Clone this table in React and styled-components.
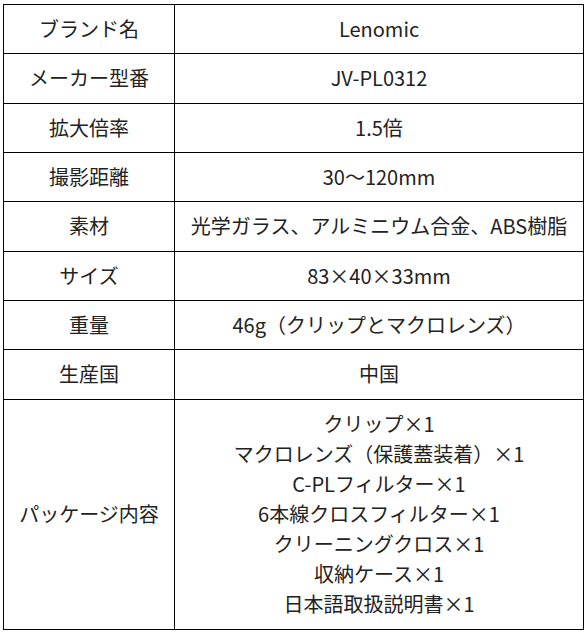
import React from "react";
import styled, { createGlobalStyle } from "styled-components";

const Global = createGlobalStyle`
  html, body { margin: 0; padding: 0; background: #fff; }
  body { font-family: "Noto Sans CJK JP", "Noto Sans", sans-serif; color: #222; }
`;

const Page = styled.div`
  padding: 4px 0 0 3px;
`;

const Table = styled.table`
  width: 581px;
  border-collapse: separate;
  border-spacing: 0;
  border-top: 1px solid #000;
  border-left: 1px solid #000;
  table-layout: fixed;
  font-size: 20px;
  line-height: 30px;
`;

const Cell = styled.td`
  border-right: 1px solid #000;
  border-bottom: 1px solid #000;
  text-align: center;
  vertical-align: middle;
  padding: ${(p) => (p.$tall ? "9.65px" : "9.17px")} 4px;
  white-space: nowrap;
`;

const LabelCell = styled(Cell)`
  width: 162px;
`;

const Line = styled.div`
  line-height: 30px;
`;

const rows = [
  ["ブランド名", "Lenomic"],
  ["メーカー型番", "JV-PL0312"],
  ["拡大倍率", "1.5倍"],
  ["撮影距離", "30〜120mm"],
  ["素材", "光学ガラス、アルミニウム合金、ABS樹脂"],
  ["サイズ", "83×40×33mm"],
  ["重量", "46g（クリップとマクロレンズ）"],
  ["生産国", "中国"],
];

const pkg = [
  "クリップ×1",
  "マクロレンズ（保護蓋装着）×1",
  "C-PLフィルター×1",
  "6本線クロスフィルター×1",
  "クリーニングクロス×1",
  "収納ケース×1",
  "日本語取扱説明書×1",
];

export default function App() {
  return (
    <>
      <Global />
      <Page>
        <Table>
          <tbody>
            {rows.map(([k, v]) => (
              <tr key={k}>
                <LabelCell>{k}</LabelCell>
                <Cell>{v}</Cell>
              </tr>
            ))}
            <tr>
              <LabelCell $tall>パッケージ内容</LabelCell>
              <Cell $tall>
                {pkg.map((l) => (
                  <Line key={l}>{l}</Line>
                ))}
              </Cell>
            </tr>
          </tbody>
        </Table>
      </Page>
    </>
  );
}
